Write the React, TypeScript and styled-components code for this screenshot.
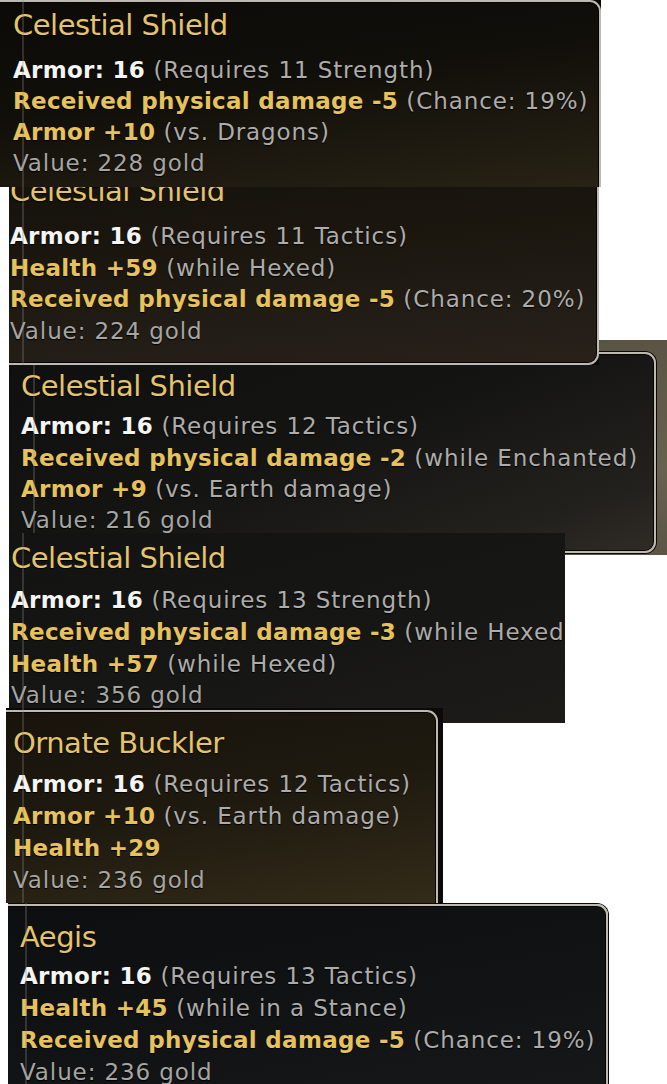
import React from "react";
import styled, { createGlobalStyle } from "styled-components";

const GlobalStyle = createGlobalStyle`
  html, body {
    margin: 0;
    padding: 0;
    background: #ffffff;
    overflow: hidden;
  }
`;

type Tone = "base" | "mod" | "value";
type Part = { text: string; note?: string; tone: Tone };

type Item = {
  title: string;
  rows: Part[];
  left: number;
  width: number;
  height: number;
  overlap: number;
  z: number;
  textX: number;
  titleY: number;
  firstRowY: number;
  rowH: number;
  frameTop: number;
  frameBottom?: number;
  frameRight: number;
  seam: number;
  bg: string;
  outside: string;
};

const TITLE_LH = 34;
const HIDDEN = 60;

const Page = styled.div`
  display: flex;
  flex-direction: column;
  width: 667px;
  height: 1084px;
  overflow: hidden;
  font-family: "DejaVu Sans", Verdana, sans-serif;
`;

const Shot = styled.div<{
  $left: number;
  $width: number;
  $height: number;
  $overlap: number;
  $z: number;
  $outside: string;
}>`
  position: relative;
  z-index: ${(p) => p.$z};
  flex: none;
  margin-left: ${(p) => p.$left}px;
  margin-top: ${(p) => -p.$overlap}px;
  width: ${(p) => p.$width}px;
  height: ${(p) => p.$height}px;
  overflow: hidden;
  background: ${(p) => p.$outside};
`;

const Tooltip = styled.div<{
  $top: number;
  $right: number;
  $height: number;
  $pad: number;
  $textX: number;
  $bg: string;
}>`
  box-sizing: border-box;
  margin-top: ${(p) => p.$top}px;
  margin-left: ${-HIDDEN}px;
  width: calc(100% + ${(p) => HIDDEN - p.$right}px);
  height: ${(p) => p.$height}px;
  padding: ${(p) => p.$pad}px 0 0 ${(p) => HIDDEN + p.$textX - 2}px;
  border: 2px solid #bdbab2;
  border-radius: 11px;
  box-shadow: 0 0 0 1px #0a0906, inset 0 0 0 1px #050403;
  background: ${(p) => p.$bg};
  white-space: nowrap;
`;

const Seam = styled.div<{ $x: number }>`
  position: absolute;
  top: 0;
  bottom: 0;
  left: ${(p) => p.$x}px;
  width: 2px;
  background: rgba(150, 145, 130, 0.28);
  pointer-events: none;
`;

const Title = styled.div<{ $gap: number }>`
  height: ${TITLE_LH}px;
  line-height: ${TITLE_LH}px;
  margin-bottom: ${(p) => p.$gap}px;
  font-size: 29px;
  letter-spacing: -0.5px;
  color: #e3c36c;
  text-shadow: 0 1px 1px #000;
`;

const Row = styled.div<{ $h: number }>`
  height: ${(p) => p.$h}px;
  line-height: ${(p) => p.$h}px;
  font-size: 23px;
  text-shadow: 0 1px 1px #000;
`;

const Stat = styled.span<{ $tone: Tone }>`
  font-weight: ${(p) => (p.$tone === "value" ? 400 : 700)};
  letter-spacing: ${(p) => (p.$tone === "value" ? 0.9 : 0.3)}px;
  color: ${(p) =>
    p.$tone === "base" ? "#f4f4f2" : p.$tone === "mod" ? "#e6c25c" : "#a6a5a2"};
`;

const Note = styled.span`
  letter-spacing: 0.9px;
  color: #adacaa;
`;

const items: Item[] = [
  {
    title: "Celestial Shield",
    rows: [
      { text: "Armor: 16", note: "(Requires 11 Strength)", tone: "base" },
      { text: "Received physical damage -5", note: "(Chance: 19%)", tone: "mod" },
      { text: "Armor +10", note: "(vs. Dragons)", tone: "mod" },
      { text: "Value: 228 gold", tone: "value" },
    ],
    left: 0, width: 601, height: 187, overlap: 0, z: 1,
    textX: 13, titleY: 25, firstRowY: 70, rowH: 31,
    frameTop: 0, frameRight: 0, seam: 22,
    bg: "linear-gradient(172deg, #0b0a07 0%, #110f0a 40%, #221d12 75%, #2e2818 100%)",
    outside: "#0a0906",
  },
  {
    title: "Celestial Shield",
    rows: [
      { text: "Armor: 16", note: "(Requires 11 Tactics)", tone: "base" },
      { text: "Health +59", note: "(while Hexed)", tone: "mod" },
      { text: "Received physical damage -5", note: "(Chance: 20%)", tone: "mod" },
      { text: "Value: 224 gold", tone: "value" },
    ],
    left: 9, width: 590, height: 178, overlap: 0, z: 3,
    textX: 1, titleY: 4, firstRowY: 50, rowH: 31.6,
    frameTop: -30, frameBottom: 178, frameRight: 0, seam: 13,
    bg: "linear-gradient(175deg, #14110b 0%, #1b170f 45%, #27211a 100%)",
    outside: "#0a0906",
  },
  {
    title: "Celestial Shield",
    rows: [
      { text: "Armor: 16", note: "(Requires 12 Tactics)", tone: "base" },
      { text: "Received physical damage -2", note: "(while Enchanted)", tone: "mod" },
      { text: "Armor +9", note: "(vs. Earth damage)", tone: "mod" },
      { text: "Value: 216 gold", tone: "value" },
    ],
    left: 9, width: 658, height: 215, overlap: 25, z: 2,
    textX: 12, titleY: 46, firstRowY: 87, rowH: 31.4,
    frameTop: 12, frameBottom: 213, frameRight: 11, seam: 24,
    bg: "linear-gradient(160deg, #0f0f0f 0%, #141413 50%, #23211d 85%, #2f2c26 100%)",
    outside: "linear-gradient(180deg, #5a5444 0%, #686150 60%, #5b5546 100%)",
  },
  {
    title: "Celestial Shield",
    rows: [
      { text: "Armor: 16", note: "(Requires 13 Strength)", tone: "base" },
      { text: "Received physical damage -3", note: "(while Hexed)", tone: "mod" },
      { text: "Health +57", note: "(while Hexed)", tone: "mod" },
      { text: "Value: 356 gold", tone: "value" },
    ],
    left: 9, width: 556, height: 190, overlap: 22, z: 4,
    textX: 2, titleY: 25, firstRowY: 68, rowH: 31.7,
    frameTop: -20, frameRight: -20, seam: 13,
    bg: "linear-gradient(165deg, #121212 0%, #161615 55%, #1f1d19 100%)",
    outside: "#121212",
  },
  {
    title: "Ornate Buckler",
    rows: [
      { text: "Armor: 16", note: "(Requires 12 Tactics)", tone: "base" },
      { text: "Armor +10", note: "(vs. Earth damage)", tone: "mod" },
      { text: "Health +29", tone: "mod" },
      { text: "Value: 236 gold", tone: "value" },
    ],
    left: 6, width: 437, height: 195, overlap: 15, z: 5,
    textX: 7, titleY: 35, firstRowY: 76, rowH: 32,
    frameTop: 2, frameRight: 5, seam: 16,
    bg: "linear-gradient(170deg, #17130b 0%, #1f1a10 45%, #2f2817 80%, #3a311d 100%)",
    outside: "#0b0a08",
  },
  {
    title: "Aegis",
    rows: [
      { text: "Armor: 16", note: "(Requires 13 Tactics)", tone: "base" },
      { text: "Health +45", note: "(while in a Stance)", tone: "mod" },
      { text: "Received physical damage -5", note: "(Chance: 19%)", tone: "mod" },
      { text: "Value: 236 gold", tone: "value" },
    ],
    left: 8, width: 601, height: 181, overlap: 0, z: 6,
    textX: 12, titleY: 34, firstRowY: 73, rowH: 32,
    frameTop: 1, frameRight: 1, seam: 17,
    bg: "linear-gradient(170deg, #0d0e10 0%, #121315 55%, #18191a 100%)",
    outside: "#ffffff",
  },
];

const Panel = ({ item }: { item: Item }) => {
  const bottom = item.frameBottom ?? item.height + 40;
  const pad = item.titleY - TITLE_LH / 2 - item.frameTop - 2;
  const gap = item.firstRowY - item.rowH / 2 - (item.titleY + TITLE_LH / 2);
  return (
    <Shot
      $left={item.left}
      $width={item.width}
      $height={item.height}
      $overlap={item.overlap}
      $z={item.z}
      $outside={item.outside}
    >
      <Tooltip
        $top={item.frameTop}
        $right={item.frameRight}
        $height={bottom - item.frameTop}
        $pad={pad}
        $textX={item.textX}
        $bg={item.bg}
      >
        <Title $gap={gap}>{item.title}</Title>
        {item.rows.map((r, i) => (
          <Row key={i} $h={item.rowH}>
            <Stat $tone={r.tone}>{r.text}</Stat>
            {r.note && <Note> {r.note}</Note>}
          </Row>
        ))}
      </Tooltip>
      <Seam $x={item.seam} />
    </Shot>
  );
};

export default function App() {
  return (
    <>
      <GlobalStyle />
      <Page>
        {items.map((it, i) => (
          <Panel key={i} item={it} />
        ))}
      </Page>
    </>
  );
}
